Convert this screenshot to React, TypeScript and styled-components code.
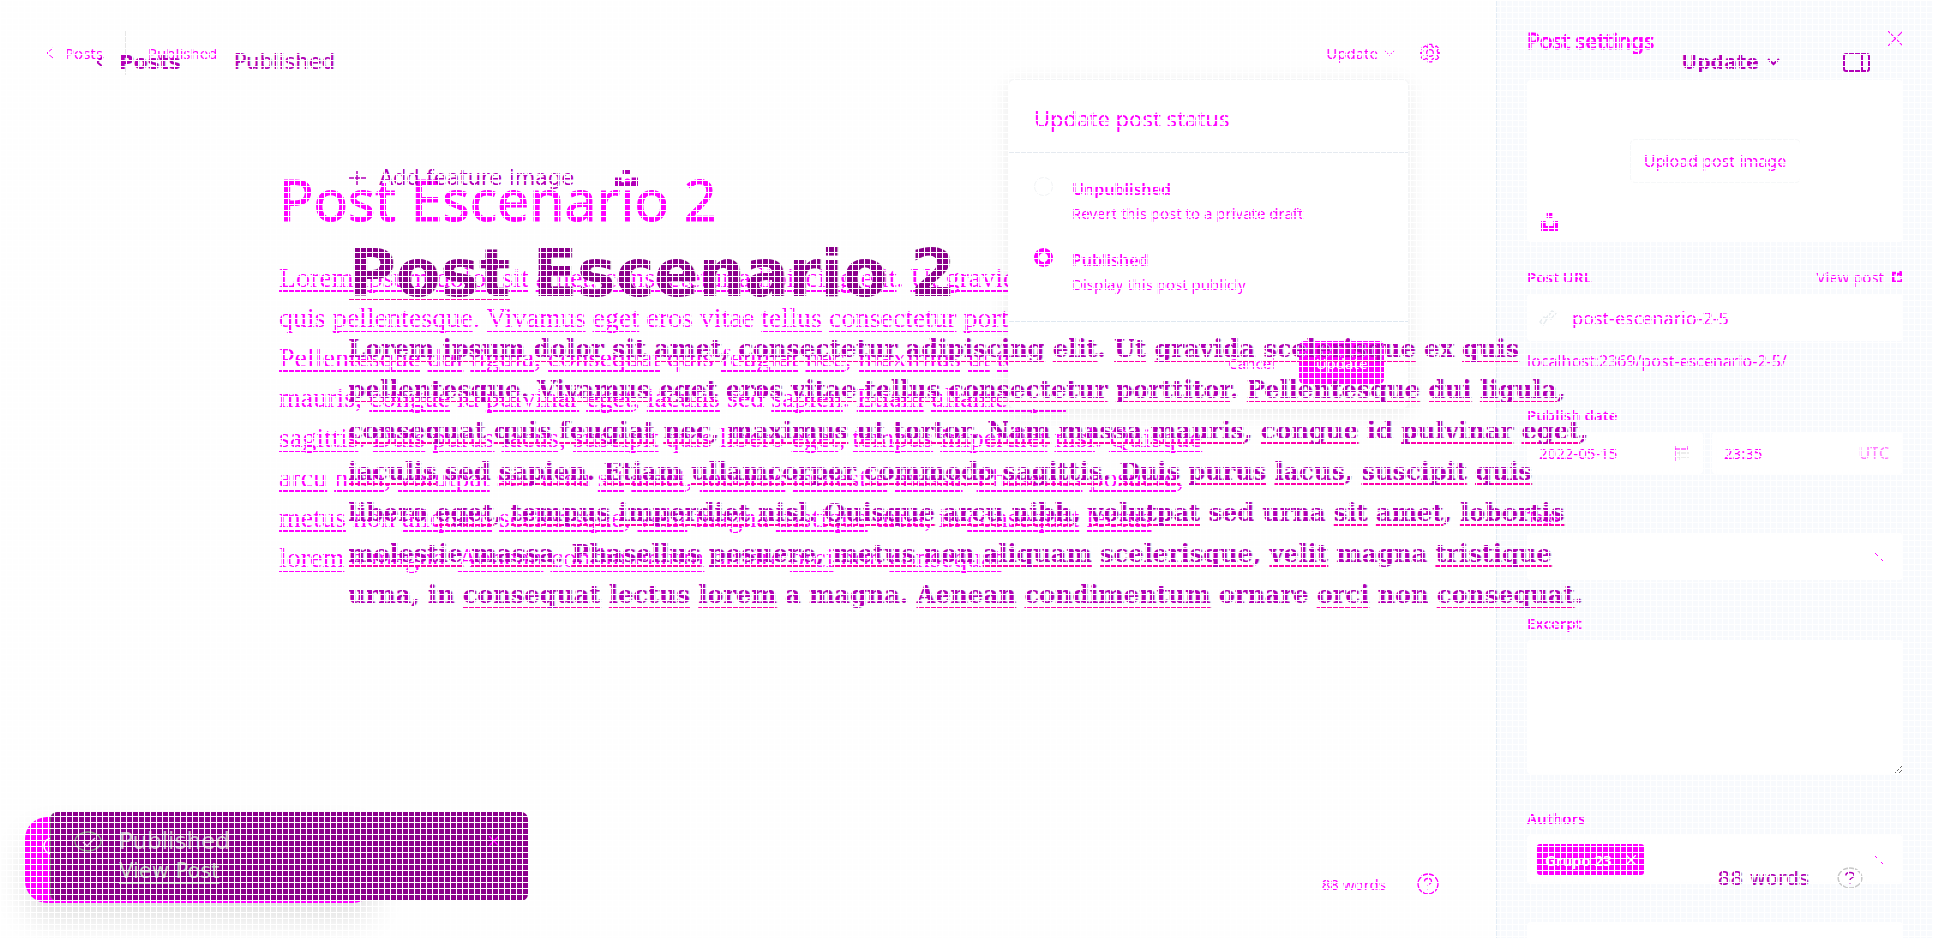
import React from 'react';
import styled, { createGlobalStyle } from 'styled-components';

const MAGENTA = '#ff00ff';
const PLUM = '#b200b8';
const DEEP = '#8b008b';
const SANS = '"Noto Sans", "Open Sans", sans-serif';
const WIDE = '"DejaVu Sans", "Noto Sans", sans-serif';

const GlobalStyle = createGlobalStyle`
  *, *::before, *::after { box-sizing: border-box; }
  body { margin: 0; background: #fefefe; color: ${MAGENTA}; font: 15px/20px ${SANS}; }
  button, input, textarea, select { font: inherit; color: inherit; }
  h1, h2, p { margin: 0; font-weight: 400; }
`;

const Page = styled.div`
  position: relative;
  display: flex;
  height: 100vh;
  overflow: hidden;
`;

/* White 6px mesh laid over the whole page */
const Mesh = styled.div`
  position: absolute;
  inset: 0;
  z-index: 5;
  pointer-events: none;
  background-image:
    linear-gradient(to right, #fff 1px, transparent 1px),
    linear-gradient(to bottom, #fff 1px, transparent 1px);
  background-size: 6px 6px;
`;

const Main = styled.main`
  position: relative;
  flex: 1;
  min-width: 0;
  display: flex;
  flex-direction: column;
`;

const Bar = styled.header`
  display: flex;
  align-items: center;
  justify-content: space-between;
  height: 106px;
  padding: 0 56px 0 46px;
`;

const Group = styled.div<{ $gap: number }>`
  display: flex;
  align-items: center;
  gap: ${p => p.$gap}px;
`;

const Plain = styled.button<{ $gap?: number }>`
  display: flex;
  align-items: center;
  gap: ${p => p.$gap ?? 6}px;
  padding: 0;
  border: 0;
  background: none;
  white-space: nowrap;
`;

const TextLink = styled.a<{ $gap?: number }>`
  display: flex;
  align-items: center;
  gap: ${p => p.$gap ?? 8}px;
  color: inherit;
  text-decoration: none;
`;

const Divider = styled.span`
  width: 1px;
  height: 44px;
  background: #e6e6e6;
`;

const Article = styled.article`
  padding: 55px 0 0 279px;
  white-space: nowrap;
`;

const Title = styled.h1`
  font-size: 57px;
  line-height: 76px;
  -webkit-text-stroke: 1px ${MAGENTA};
`;

const Body = styled.p`
  margin-top: 21px;
  font: 28px/40px "Liberation Serif", serif;
`;

const Line = styled.span`
  display: block;
`;

const Word = styled.span<{ $color: string }>`
  text-decoration: underline 2px ${p => p.$color};
  text-underline-offset: 3px;
  text-decoration-skip-ink: none;
`;

const Footer = styled.footer`
  display: flex;
  align-items: center;
  justify-content: flex-end;
  gap: 31px;
  margin-top: auto;
  padding: 0 57px 43px 0;
`;

const Popup = styled.form`
  position: absolute;
  top: 79px;
  right: 87px;
  width: 401px;
  height: 330px;
  border: 1px solid #f4f5f6;
  border-radius: 6px;
  background: #fff;
  box-shadow: 0 4px 20px rgba(0, 0, 0, 0.08);
`;

const PopupTitle = styled.h2`
  padding: 24px 25px 19px;
  border-bottom: 1px solid #e5eaf0;
  font-size: 22px;
  line-height: 29px;
`;

const Options = styled.div`
  display: grid;
  gap: 23px;
  padding: 24px 25px 25px;
  border-bottom: 1px solid #dfe8f1;
`;

const Option = styled.label`
  display: flex;
  gap: 19px;
  line-height: 24px;
`;

const Radio = styled.input`
  appearance: none;
  flex: none;
  width: 19px;
  height: 19px;
  margin: 0;
  border: 1px solid #f1f3f5;
  border-radius: 50%;
  &:checked { border: 5px solid ${MAGENTA}; }
`;

const Strong = styled.span`
  display: block;
  font-size: 16px;
  font-weight: 600;
`;

const Actions = styled.div`
  display: flex;
  justify-content: flex-end;
  gap: 24px;
  padding: 19px 24px;
`;

const Primary = styled.button`
  width: 85px;
  height: 43px;
  padding: 0;
  border: 0;
  border-radius: 5px;
  background: ${MAGENTA};
  color: #fff;
`;

const Settings = styled.aside`
  flex: none;
  width: 437px;
  padding: 27px 30px 0;
  border-left: 1px solid #e3ecf5;
  background: #f8fafd;
  overflow: hidden;
`;

const SettingsHead = styled.div`
  display: flex;
  align-items: flex-start;
  justify-content: space-between;
  height: 53px;
`;

const SettingsTitle = styled.h2`
  padding-top: 2px;
  font-size: 21px;
  line-height: 25px;
  -webkit-text-stroke: 1px ${MAGENTA};
`;

const CloseButton = styled(Plain)`
  height: 22px;
`;

const Upload = styled.div`
  position: relative;
  display: flex;
  justify-content: center;
  align-items: center;
  height: 162px;
  border-radius: 4px;
  background: #fff;
`;

const UploadButton = styled.button`
  width: 171px;
  height: 44px;
  padding: 0;
  border: 1px solid #f6f8f9;
  border-radius: 5px;
  background: #fff;
  font-size: 16px;
`;

const Corner = styled.span`
  position: absolute;
  left: 14px;
  bottom: 11px;
  display: flex;
`;

const Field = styled.div<{ $top: number }>`
  margin-top: ${p => p.$top}px;
`;

const LabelRow = styled.div`
  display: flex;
  align-items: flex-start;
  justify-content: space-between;
  height: 27px;
`;

const Label = styled.label`
  font-weight: 600;
`;

const Box = styled.div<{ $h?: number }>`
  display: flex;
  align-items: center;
  gap: 14px;
  height: ${p => p.$h ?? 47}px;
  padding: 0 14px 0 12px;
  border-radius: 4px;
  background: #fff;
`;

const Input = styled.input<{ $size?: number }>`
  flex: 1;
  min-width: 0;
  width: 100%;
  padding: 0;
  border: 0;
  outline: 0;
  background: none;
  font-size: ${p => p.$size ?? 15}px;
`;

const Hint = styled.p`
  margin-top: 10px;
  font-size: 16px;
`;

const Zone = styled.span`
  color: #ff7dff;
  font-size: 16px;
`;

const Split = styled.div`
  display: grid;
  grid-template-columns: 176px 1fr;
  gap: 9px;
`;

const Area = styled.textarea`
  display: block;
  width: 100%;
  height: 134px;
  border: 0;
  border-radius: 4px;
  background: #fff;
  resize: vertical;
`;

const Chip = styled.button`
  display: flex;
  align-items: center;
  justify-content: space-between;
  width: 107px;
  height: 31px;
  padding: 0 8px;
  border: 0;
  border-radius: 3px;
  background: ${MAGENTA};
  color: #fff;
  font-weight: 600;
`;

const AuthorBox = styled(Box)`
  justify-content: space-between;
  padding: 0 20px 0 10px;
`;

/* Second revision of the editor, shown on top of the first */
const Overlay = styled.div`
  position: absolute;
  inset: 0;
  z-index: 2;
  display: flex;
  flex-direction: column;
  color: ${PLUM};
  font: 20px/24px ${WIDE};
  text-shadow: 1px 0 #d4d4d4;
`;

const WideBar = styled(Bar)`
  height: 124px;
  padding: 0 63px 0 96px;
`;

const Muted = styled.span`
  font-size: 21px;
`;

const BoldText = styled.span<{ $size?: number }>`
  font-size: ${p => p.$size ?? 20}px;
  font-weight: 700;
`;

const WideArticle = styled.article`
  padding: 42px 0 0 348px;
  white-space: nowrap;
`;

const WideTitle = styled.h1`
  margin-top: 48px;
  color: ${DEEP};
  font: 700 65px/72px ${WIDE};
`;

const WideBody = styled.p`
  margin-top: 18px;
  font: 700 24px/41px "DejaVu Serif", serif;
`;

const WideFooter = styled(Footer)`
  gap: 28px;
  padding: 0 70px 48px 0;
`;

const OldToast = styled.div`
  position: absolute;
  left: 25px;
  bottom: 35px;
  width: 350px;
  height: 86px;
  padding: 20px 16px;
  border-radius: 22px;
  background: ${MAGENTA};
  box-shadow: 0 16px 32px rgba(0, 0, 0, 0.12);
  color: #fff;
`;

const Toast = styled.div`
  position: absolute;
  left: 50px;
  bottom: 37px;
  display: grid;
  grid-template-columns: 28px 1fr auto;
  grid-auto-rows: 30px;
  align-content: start;
  align-items: center;
  gap: 0 17px;
  width: 478px;
  height: 89px;
  padding: 14px 29px 0 23px;
  border-left: 1px solid #6c776c;
  border-radius: 7px;
  background: ${DEEP};
  color: #c9b6c9;
  text-shadow: none;
`;

const ToastText = styled.span`
  font-size: 23px;
`;

const ToastLink = styled.a`
  grid-column: 2;
  justify-self: start;
  color: #bcc4bc;
  font-size: 21px;
  text-underline-offset: 4px;
`;

const ToastClose = styled(Plain)`
  color: ${MAGENTA};
`;

const Chevron = ({ dir, w = 10, h = 7, s = 1 }: { dir: 'down' | 'left'; w?: number; h?: number; s?: number }) => (
  <svg width={w} height={h} viewBox={dir === 'down' ? '0 0 12 8' : '0 0 8 12'} preserveAspectRatio="none" fill="none" stroke="currentColor" strokeWidth={s}>
    <path d={dir === 'down' ? 'M1 1l5 5 5-5' : 'M7 1L1 6l6 5'} />
  </svg>
);

const Slash = () => (
  <svg width="8" height="8" viewBox="0 0 8 8" stroke="currentColor" strokeWidth="1">
    <path d="M0 0l4 4M6 6l2 2" />
  </svg>
);

const Gear = () => (
  <svg width="20" height="20" viewBox="0 0 24 24" fill="none" stroke="currentColor" strokeWidth="1.5">
    <circle cx="12" cy="12" r="4" />
    <path d="M10 1.5h4l.7 3 2 .9 2.8-1.700 2.800 2.800-1.700 2.800.9 2 3 .7-3 .7-.9 2 1.700 2.800-2.800 2.800-2.800-1.700-2 .9-.7 3h-4l-.7-3-2-.9-2.800 1.700-2.800-2.800 1.700-2.800-.9-2-3-.7 3-.7.9-2-1.700-2.800L6.500 3.700l2.800 1.700z" />
  </svg>
);

const Cross = ({ size, s = 1 }: { size: number; s?: number }) => (
  <svg width={size} height={size} viewBox="0 0 14 14" stroke="currentColor" strokeWidth={s}>
    <path d="M0 0l14 14M14 0L0 14" />
  </svg>
);

const Unsplash = ({ w, h }: { w: number; h: number }) => (
  <svg width={w} height={h} viewBox="0 0 18 18" preserveAspectRatio="none" fill="currentColor">
    <path d="M6 0h6v5H6zM0 8h5v5h8V8h5v10H0z" />
  </svg>
);

const Help = ({ w, h, ring = 'currentColor' }: { w: number; h: number; ring?: string }) => (
  <svg width={w} height={h} viewBox="0 0 22 22" preserveAspectRatio="none" fill="none" stroke="currentColor" strokeWidth="1.3">
    <circle cx="11" cy="11" r="10" stroke={ring} />
    <path d="M7.500 8.500c0-4 7-4 7 0 0 2.500-3.500 2-3.500 4.500M11 15v1.500" />
  </svg>
);

const CheckRing = () => (
  <svg width="28" height="21" viewBox="0 0 28 21" fill="none" stroke="#8a968a" strokeWidth="1.5">
    <ellipse cx="14" cy="10.500" rx="13" ry="9.500" />
    <path d="M9 11l4 4 8-8" stroke="#e8c8e8" />
  </svg>
);

const External = () => (
  <svg width="11" height="12" viewBox="0 0 11 12" fill="none" stroke="currentColor" strokeWidth="2.400">
    <path d="M4 2H1.200v8.800h8.600V8M5 6V3h4M8 0l2 3-2 3" />
  </svg>
);

const PenLink = () => (
  <svg width="19" height="17" viewBox="0 0 19 17" fill="none" stroke="#e7ecef" strokeWidth="1.500">
    <path d="M1 13l4-5 3 2-4 6zM8 8l5-6 4 2-5 6zM6 10l6-6" />
  </svg>
);

const Calendar = () => (
  <svg width="15" height="16" viewBox="0 0 15 16" fill="none" stroke="currentColor">
    <path d="M1 1v15M13 1v3M1 4h13" />
    <path d="M3 8h12M3 12h12M6 5v10" stroke="#d9d9d9" />
  </svg>
);

const Panel = () => (
  <svg width="27" height="19" viewBox="0 0 27 19" fill="none" stroke="currentColor" strokeWidth="2">
    <rect x="1" y="1" width="25" height="17" rx="2" />
    <path d="M19 1v17" />
  </svg>
);

const Plus = () => (
  <svg width="18" height="14" viewBox="0 0 18 14" stroke="currentColor" strokeWidth="1.500">
    <path d="M0 7h18M9 0v14" />
  </svg>
);

const OLD_LINES = [
  'Lorem ipsum dolor sit amet, consectetur adipiscing elit. Ut gravida scelerisque ex',
  'quis pellentesque. Vivamus eget eros vitae tellus consectetur porttitor.',
  'Pellentesque dui ligula, consequat quis feugiat nec, maximus ut tortor. Nam massa',
  'mauris, congue id pulvinar eget, iaculis sed sapien. Etiam ullamcorper',
  'sagittis. Duis purus lacus, suscipit quis libero eget, tempus imperdiet nisl. Quisque',
  'arcu nibh, volutpat sed urna sit amet, lobortis molestie massa. Phasellus posuere,',
  'metus non aliquam scelerisque, velit magna tristique urna, in consequat lectus',
  'lorem a magna. Aenean condimentum ornare orci non consequat.',
];

const NEW_LINES = [
  'Lorem ipsum dolor sit amet, consectetur adipiscing elit. Ut gravida scelerisque ex quis',
  'pellentesque. Vivamus eget eros vitae tellus consectetur porttitor. Pellentesque dui ligula,',
  'consequat quis feugiat nec, maximus ut tortor. Nam massa mauris, congue id pulvinar eget,',
  'iaculis sed sapien. Etiam ullamcorper commodo sagittis. Duis purus lacus, suscipit quis',
  'libero eget, tempus imperdiet nisl. Quisque arcu nibh, volutpat sed urna sit amet, lobortis',
  'molestie massa. Phasellus posuere, metus non aliquam scelerisque, velit magna tristique',
  'urna, in consequat lectus lorem a magna. Aenean condimentum ornare orci non consequat.',
];

const KNOWN = ['ex', 'id', 'sed', 'urna', 'in', 'a', 'magna', 'ornare', 'non', 'eros', 'libero'];
const OLD_KNOWN = [...KNOWN, 'quis', 'vitae', 'mauris'];

const Spelled = ({ lines, known, color }: { lines: string[]; known: string[]; color: string }) => (
  <>
    {lines.map(line => (
      <Line key={line}>
        {line.split(' ').map((token, i) => {
          const word = token.replace(/[.,]/g, '');
          const tail = token.slice(word.length);
          return (
            <React.Fragment key={i}>
              {known.includes(word) ? word : <Word $color={color}>{word}</Word>}
              {tail}{' '}
            </React.Fragment>
          );
        })}
      </Line>
    ))}
  </>
);

export default function App() {
  return (
    <Page>
      <GlobalStyle />
      <Main>
        <Bar>
          <Group $gap={22}>
            <TextLink href="#posts" $gap={11}>
              <Chevron dir="left" w={8} h={12} />Posts
            </TextLink>
            <Divider />
            <span>Published</span>
          </Group>
          <Group $gap={25}>
            <Plain type="button">Update <Chevron dir="down" w={11} h={7} /></Plain>
            <Plain type="button" aria-label="Settings"><Gear /></Plain>
          </Group>
        </Bar>
        <Article>
          <Title>Post Escenario 2</Title>
          <Body><Spelled lines={OLD_LINES} known={OLD_KNOWN} color={MAGENTA} /></Body>
        </Article>
        <Footer>
          <span>88 words</span>
          <Plain type="button" aria-label="Help"><Help w={22} h={22} /></Plain>
        </Footer>
        <Popup>
          <PopupTitle>Update post status</PopupTitle>
          <Options>
            <Option>
              <Radio type="radio" name="status" />
              <span><Strong>Unpublished</Strong>Revert this post to a private draft</span>
            </Option>
            <Option>
              <Radio type="radio" name="status" defaultChecked />
              <span><Strong>Published</Strong>Display this post publicly</span>
            </Option>
          </Options>
          <Actions>
            <Plain type="button">Cancel</Plain>
            <Primary type="button">Update</Primary>
          </Actions>
        </Popup>
        <OldToast>
          <svg width="22" height="18" viewBox="0 0 22 18" fill="none" stroke="currentColor" strokeWidth="1.500">
            <circle cx="11" cy="9" r="8" />
          </svg>
        </OldToast>
      </Main>

      <Settings>
        <SettingsHead>
          <SettingsTitle>Post settings</SettingsTitle>
          <CloseButton type="button" aria-label="Close"><Cross size={15} /></CloseButton>
        </SettingsHead>
        <Upload>
          <UploadButton type="button">Upload post image</UploadButton>
          <Corner><Unsplash w={17} h={18} /></Corner>
        </Upload>
        <Field $top={25}>
          <LabelRow>
            <Label htmlFor="url">Post URL</Label>
            <TextLink href="#view"><span>View post</span><External /></TextLink>
          </LabelRow>
          <Box><PenLink /><Input id="url" $size={18} defaultValue="post-escenario-2-5" /></Box>
          <Hint>localhost:2369/post-escenario-2-5/</Hint>
        </Field>
        <Field $top={34}>
          <LabelRow><Label htmlFor="date">Publish date</Label></LabelRow>
          <Split>
            <Box $h={42}><Input id="date" defaultValue="2022-05-15" /><Calendar /></Box>
            <Box $h={42}><Input aria-label="Publish time" defaultValue="23:35" /><Zone>UTC</Zone></Box>
          </Split>
        </Field>
        <Field $top={32}>
          <LabelRow><Label htmlFor="tags">Tags</Label></LabelRow>
          <AuthorBox><Input id="tags" /><Slash /></AuthorBox>
        </Field>
        <Field $top={33}>
          <LabelRow><Label htmlFor="excerpt">Excerpt</Label></LabelRow>
          <Area id="excerpt" />
        </Field>
        <Field $top={34}>
          <LabelRow><Label as="span">Authors</Label></LabelRow>
          <AuthorBox $h={49}>
            <Chip type="button">Grupo 23 <Cross size={10} s={2} /></Chip>
            <Slash />
          </AuthorBox>
        </Field>
        <Field $top={38}><Box /></Field>
      </Settings>

      <Overlay>
        <WideBar>
          <Group $gap={53}>
            <TextLink href="#posts" $gap={15}>
              <Chevron dir="left" w={8} h={12} s={2} /><BoldText>Posts</BoldText>
            </TextLink>
            <Muted>Published</Muted>
          </Group>
          <Group $gap={63}>
            <Plain type="button" $gap={8}><BoldText $size={19}>Update</BoldText><Chevron dir="down" w={13} h={8} s={2} /></Plain>
            <Plain type="button" aria-label="Toggle sidebar"><Panel /></Plain>
          </Group>
        </WideBar>
        <WideArticle>
          <Group $gap={41}>
            <Plain type="button" $gap={13}><Plus /><Muted>Add feature image</Muted></Plain>
            <Plain type="button" aria-label="Unsplash"><Unsplash w={23} h={17} /></Plain>
          </Group>
          <WideTitle><Word $color="#ff00a8">Post</Word> Escenario 2</WideTitle>
          <WideBody><Spelled lines={NEW_LINES} known={KNOWN} color="#ff00a8" /></WideBody>
        </WideArticle>
        <WideFooter>
          <span>88 words</span>
          <Plain type="button" aria-label="Help"><Help w={26} h={22} ring="#c8c8c8" /></Plain>
        </WideFooter>
        <Toast role="status">
          <CheckRing />
          <ToastText>Published</ToastText>
          <ToastClose type="button" aria-label="Dismiss"><Cross size={10} s={2} /></ToastClose>
          <ToastLink href="#view">View Post</ToastLink>
        </Toast>
      </Overlay>
      <Mesh />
    </Page>
  );
}
